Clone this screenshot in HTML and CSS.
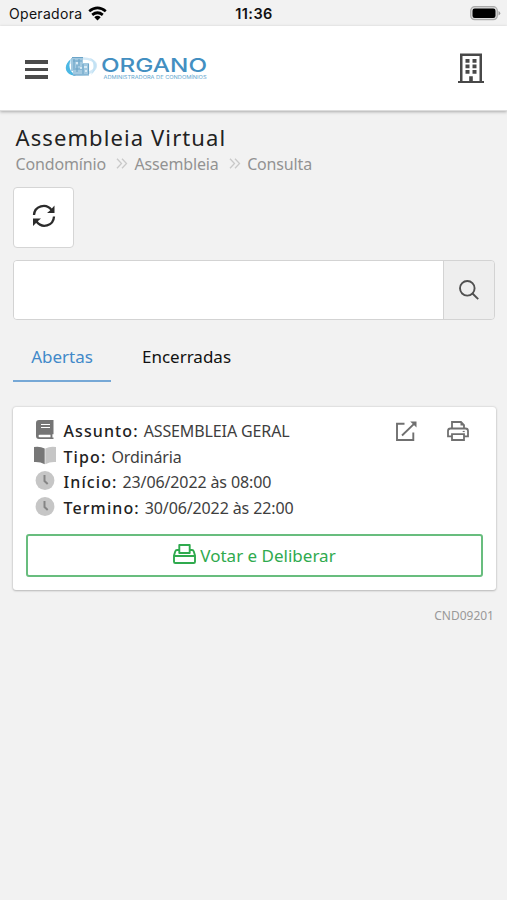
FILE: index.html
```html
<!DOCTYPE html>
<html lang="pt-BR">
<head>
<meta charset="utf-8">
<title>Assembleia Virtual</title>
<link rel="stylesheet" href="styles.css">
</head>
<body>
<div class="status">
  <div class="carrier"><span>Operadora</span>
    <svg width="19" height="15" viewBox="0 0 19 15" fill="none" stroke="#000" stroke-width="2.7"><path d="M1.2 5.2Q9.500-1.600 17.800 5.200M4.200 8.900Q9.500 4.600 14.800 8.900"/><path d="M6.300 11.200Q9.500 8.400 12.700 11.200L9.500 14.500Z" fill="#000" stroke="none"/></svg>
  </div>
  <div class="clock">11:36</div>
  <svg class="battery" width="31" height="15" viewBox="0 0 31 15"><rect x=".7" y=".7" width="26.600" height="13" rx="4" fill="#ddd" stroke="#aaa" stroke-width="1.200"/><rect x="2.500" y="2.500" width="23" height="9.500" rx="2.200"/><path d="M28.500 5Q32 7.200 28.500 9.500Z" fill="#999"/></svg>
</div>
<header class="header">
  <div class="menu"><i></i><i></i><i></i></div>
  <svg class="logo" width="142" height="26" viewBox="0 0 142 26">
    <ellipse cx="16.500" cy="11.500" rx="14.500" ry="8" fill="none" stroke="#d3e9f7" stroke-width="2.500" transform="rotate(-6 17 12)"/>
    <path d="M6 4C-2 10-1 20 11 21C4 16 3 11 6 4Z" fill="#4cb8e4"/>
    <path d="M25 3C34 7 32 15 26 20C29 14 30 8 25 3Z" fill="#c3e2f4"/>
    <path d="M6 3h12v5h6v12H8v-4H6z" fill="#a3c9e0"/>
    <path d="M7 2.500h11M8 6h9M9 4v9M14 4v7M8 14h9M12 10v7M18 9v10M23.500 9v10M8 20h16" stroke="#6ba4c8" stroke-width="1.100"/>
    <path d="M11 8h2M15 13h2M19 12h3M20 16h2" stroke="#e9f5fb" stroke-width="1.500"/>
    <text class="brand" x="36" y="16.800" textLength="106" lengthAdjust="spacingAndGlyphs">ORGANO</text>
    <text class="tagline" x="38.500" y="23.500" textLength="103" lengthAdjust="spacingAndGlyphs">ADMINISTRADORA DE CONDOMÍNIOS</text>
  </svg>
  <svg class="building" width="26" height="31" viewBox="0 0 26 31" fill="#484848"><path d="M2 .5h22V28h2v2H0v-2h2zM4.500 3v25h6.700v-4.800h3.600V28h6.700V3z" fill-rule="evenodd"/><path d="M7.500 6h4v3.700h-4zM14.500 6h4v3.700h-4zM7.500 11.500h4v3.700h-4zM14.500 11.500h4v3.700h-4zM7.500 17h4v3.700h-4zM14.500 17h4v3.700h-4z"/></svg>
</header>
<main>
  <h1>Assembleia Virtual</h1>
  <nav class="crumbs">
    <span>Condomínio</span>
    <svg width="12" height="11" viewBox="0 0 12 11"><path d="M1 .7L5.500 5.500L1 10.300M6 .7L10.500 5.500L6 10.300"/></svg>
    <span>Assembleia</span>
    <svg width="12" height="11" viewBox="0 0 12 11"><path d="M1 .7L5.500 5.500L1 10.300M6 .7L10.500 5.500L6 10.300"/></svg>
    <span>Consulta</span>
  </nav>
  <button class="refresh"><svg width="24" height="24" viewBox="0 0 24 24"><path d="M2 11C2.500 2 14-1.500 19.500 6M22 12.500C21.500 22 10 25 4.500 17.500" fill="none" stroke="#2b2b2b" stroke-width="2.300"/><path d="M22.500 1.500V9h-7.500l3-2.500zM1 22v-7.500H9l-3 2.500z" fill="#2b2b2b"/></svg></button>
  <div class="search">
    <input type="text" aria-label="Pesquisar">
    <button><svg width="20" height="20" viewBox="0 0 20 20" fill="none" stroke="#505050" stroke-width="1.900"><circle cx="8.300" cy="8.300" r="7.300"/><path d="M13.500 13.500L19.200 19.200"/></svg></button>
  </div>
  <div class="tabs"><a class="tab active">Abertas</a><a class="tab second">Encerradas</a></div>
  <section class="card">
    <div class="info">
      <dl>
        <div><svg class="book" width="22" height="20" viewBox="0 0 22 20"><path d="M5 0H19.500v14.200H18.400v3.300h1.100V19H5Q2 19 2 16V3Q2 0 5 0ZM5.500 14.700Q3.500 15.900 5.500 17.300H16.500v-2.600Z" fill="#757575" fill-rule="evenodd"/><path d="M7 4.500h9M7 7.500h9" stroke="#fff" stroke-width="1.200"/></svg><dt>Assunto:</dt><dd>ASSEMBLEIA GERAL</dd></div>
        <div><svg class="open-book" width="22" height="20" viewBox="0 0 22 20"><path d="M0 1Q6 0 10.700 2.500V18.200Q6 15.500 0 16Z" fill="#777"/><path d="M22 1Q16 0 11.300 2.500V18.200Q16 15.500 22 16Z" fill="#c6c6c6"/></svg><dt>Tipo:</dt><dd>Ordinária</dd></div>
        <div><svg width="22" height="20" viewBox="0 0 22 20"><circle cx="11" cy="9.500" r="9.400" fill="#c6c6c6"/><path d="M10.500 4V10L13.700 13" fill="none" stroke="#858585" stroke-width="2"/></svg><dt>Início:</dt><dd>23/06/2022 às 08:00</dd></div>
        <div><svg width="22" height="20" viewBox="0 0 22 20"><circle cx="11" cy="9.500" r="9.400" fill="#c6c6c6"/><path d="M10.500 4V10L13.700 13" fill="none" stroke="#858585" stroke-width="2"/></svg><dt>Termino:</dt><dd>30/06/2022 às 22:00</dd></div>
      </dl>
      <div class="actions">
        <svg width="22" height="20" viewBox="0 0 22 20" fill="none" stroke="#707070" stroke-width="1.900"><path d="M9.500 2.700H2V19H18.300V11.500M7 14.500L19.300 2.600"/><path d="M15.200.5H21.500V6.500Z" fill="#707070" stroke="none"/></svg>
        <svg width="22" height="20" viewBox="0 0 22 20" fill="none" stroke="#707070" stroke-width="1.800"><path d="M5 7.500V1H14L17 4V7.500M5 15.300H1V10Q1 7.500 3.500 7.500H18.500Q21 7.500 21 10V15.300H17M5 13.200H17V19H5Z"/><path d="M13.500.5V4.500H17.500Z" fill="#707070" stroke="none"/><path d="M15.700 10.500h2" stroke-width="1.200"/></svg>
      </div>
    </div>
    <button class="vote"><svg width="23" height="20" viewBox="0 0 23 20" fill="none" stroke="#2faa4e" stroke-width="1.900" stroke-linejoin="round"><path d="M6.300 9V1H16.700V9ZM6.300 6H4Q2.700 6 2.200 7.500L1 11.500V17.700Q1 19 2.300 19H20.700Q22 19 22 17.700V11.500L20.800 7.500Q20.300 6 19 6H16.700M1 12H22"/></svg><span>Votar e Deliberar</span></button>
  </section>
  <footer>CND09201</footer>
</main>
</body>
</html>
```
FILE: styles.css
```css
* { box-sizing: border-box; }
body { margin: 0; min-height: 900px; background: #f2f2f2; color: #222; font-family: "Noto Sans", sans-serif; }
svg { display: block; flex: none; }
button { padding: 0; font: inherit; display: flex; align-items: center; justify-content: center; }
.status { height: 26px; display: grid; grid-template-columns: 1fr auto 1fr; align-items: center; padding: 2px 6px 0 9px; font-family: Inter, sans-serif; font-size: 14px; line-height: 22px; color: #111; }
.carrier { display: flex; gap: 6px; align-items: center; letter-spacing: .3px; }
.carrier svg { margin-top: -2px; }
.clock { font-weight: 600; font-size: 14.500px; letter-spacing: .4px; transform: translateX(-1px); }
.battery { justify-self: end; margin-top: -1px; }
.header { height: 85px; background: #fff; border-bottom: 1px solid #ddd; box-shadow: 0 1px 3px #aaa; display: flex; align-items: center; padding: 0 23px 0 25px; }
.menu { width: 23px; display: grid; gap: 4px; margin-top: 3px; }
.menu i { height: 3.500px; background: #4b4b4b; }
.logo { margin: 0 auto 0 17px; }
.brand { font: 500 18.500px Inter, sans-serif; fill: #438fc1; }
.tagline { font: 4.700px Inter, sans-serif; fill: #65a7cf; }
.building { margin-top: 1px; }
main { padding: 11px 10px 0 13px; }
h1 { margin: 0 0 2px 2.500px; font-size: 22px; font-weight: 400; line-height: 30px; letter-spacing: 1.100px; }
.crumbs { display: flex; align-items: center; margin-left: 2.500px; height: 21px; font-size: 16px; line-height: 21px; letter-spacing: -.15px; color: #929292; }
.crumbs svg { margin: -2px 6px 0 10.500px; fill: none; stroke: #c9c9c9; stroke-width: 1.300; }
.refresh { width: 61px; height: 61px; margin: 12px 0 12px; background: #fff; border: 1px solid #d5d5d5; border-radius: 4px; }
.refresh svg { margin-top: -3px; }
.search { width: 482px; height: 60px; display: flex; border: 1px solid #d3d3d3; border-radius: 4px; overflow: hidden; }
.search input { flex: 1; min-width: 0; border: 0; background: #fff; }
.search button { width: 51px; border: 0; border-left: 1px solid #d3d3d3; background: #eee; }
.tabs { display: flex; margin-top: 12px; height: 50px; font-size: 17px; line-height: 49px; }
.tab { width: 98px; text-align: center; color: #111; }
.active { color: #4189c9; border-bottom: 2px solid #76a8d6; }
.second { width: 151px; }
.card { margin-top: 25px; height: 183px; width: 483px; padding: 11px 13px 12px; background: #fff; border-radius: 3px; box-shadow: 0 0 2px #bbb, 0 1px 2px #bbb; }
.info { display: flex; justify-content: space-between; }
dl { margin: 0; padding-left: 8px; }
dl > div { display: flex; height: 25.600px; align-items: flex-start; font-size: 16px; line-height: 26px; }
dl svg { margin-top: 2px; }
dt { font-weight: 500; letter-spacing: 1.100px; margin-left: 7.500px; }
dd { margin: 0 0 0 5px; color: #3e3e3e; letter-spacing: -.12px; }
.actions { display: flex; gap: 30px; padding: 3px 14px 0 0; }
.vote { width: 457px; height: 43px; margin-top: 14px; border: 2px solid #68bd7e; border-radius: 3px; background: #fff; color: #2faa4e; font-size: 17px; gap: 4px; }
.vote svg { margin-top: -3px; }
footer { text-align: right; padding-right: 3px; margin-top: 16px; font-size: 12px; line-height: 20px; color: #999; }
```
